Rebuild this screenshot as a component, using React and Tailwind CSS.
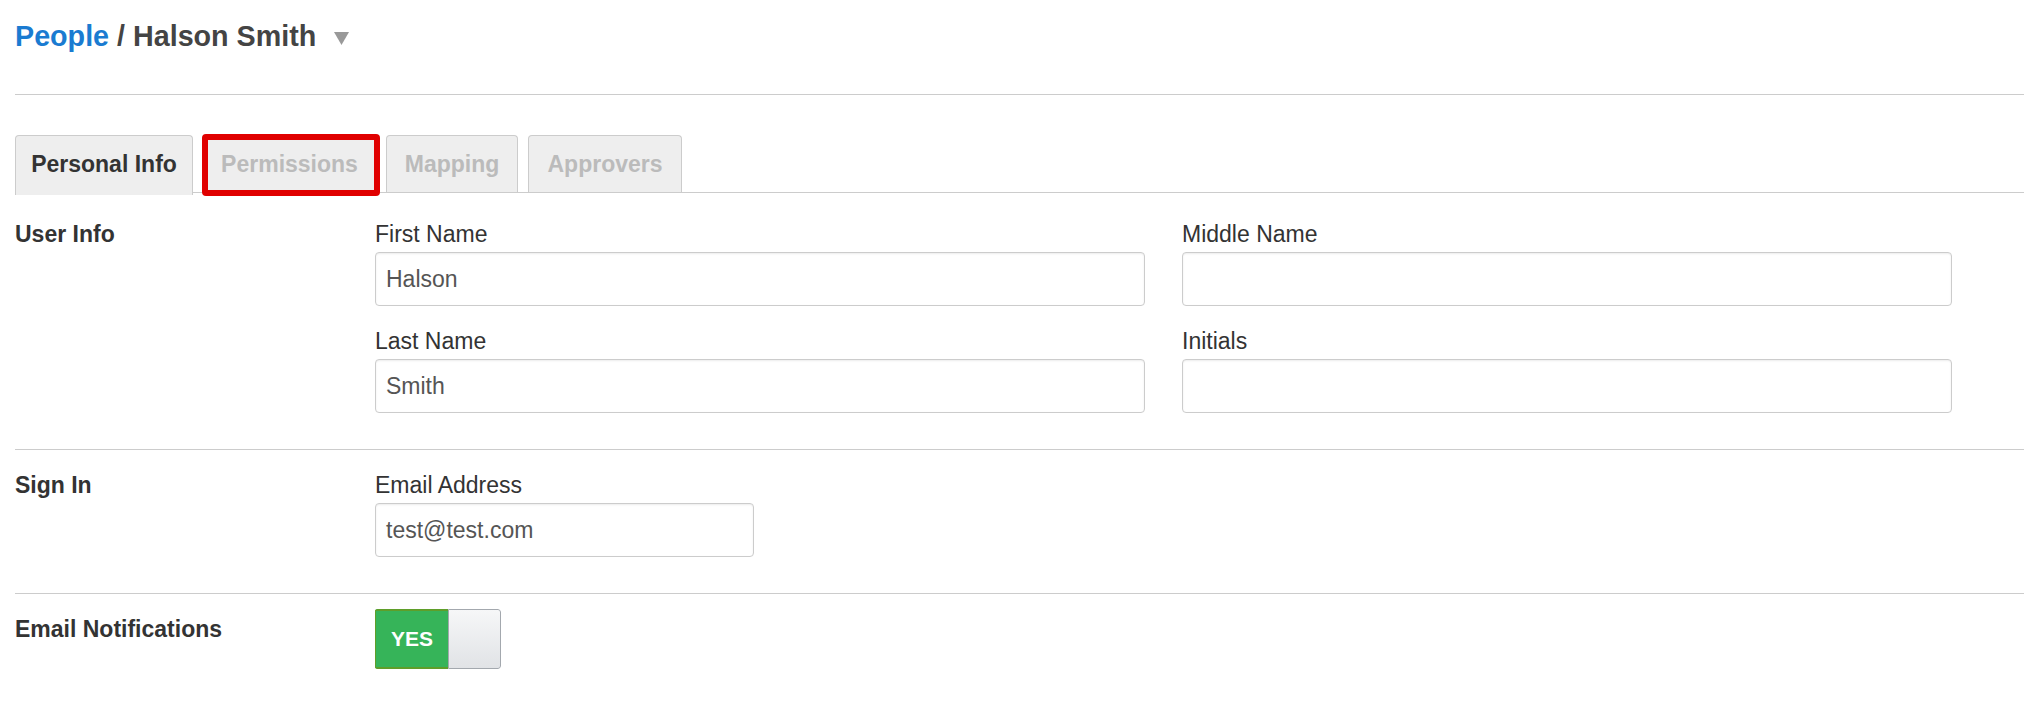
const tabs = [
  { name: "Personal Info", width: "w-[178px]", active: true },
  { name: "Permissions", width: "w-[173px]", marked: true },
  { name: "Mapping", width: "w-[132px]" },
  { name: "Approvers", width: "w-[154px]" },
]

function Field({ label, value, className }) {
  return (
    <div className={className}>
      <div className="text-[23px] leading-[32px] text-[#333]">{label}</div>
      <div className="mt-[2px] flex h-[54px] items-center rounded-[4px] border border-[#ccc] bg-white pl-[10px] text-[23px] text-[#555] shadow-[inset_0_1px_2px_rgba(0,0,0,0.08)]">
        {value}
      </div>
    </div>
  )
}

function Tab({ tab }) {
  if (tab.active) {
    return (
      <li
        className={`${tab.width} relative -mb-[3px] flex h-[60px] items-start justify-center rounded-t-[4px] border border-b-0 border-[#ccc] bg-[#eee] pt-[15px] text-[23px] font-bold leading-[26px] text-[#333]`}
      >
        {tab.name}
      </li>
    )
  }

  return (
    <li
      className={`${tab.width} relative flex h-[57px] items-start justify-center rounded-t-[4px] border border-b-0 border-[#ccc] bg-[#eee] pt-[15px] text-[23px] font-bold leading-[26px] text-[#bbb]`}
    >
      {tab.name}
      {tab.marked ? (
        <span className="absolute -top-[2px] -right-[5px] -bottom-[4px] -left-[2px] rounded-[4px] border-[6px] border-[#e00000]" />
      ) : null}
    </li>
  )
}

export default function App() {
  return (
    <div className="min-h-[706px] bg-white pl-[15px] font-['Liberation_Sans',Arial,sans-serif] text-[#333]">
      <div className="box-border flex h-[95px] items-start border-b border-[#ccc] pt-[20px]">
        <h1 className="flex items-center text-[28.7px] font-bold leading-[32px] text-[#444]">
          <span className="text-[#1a7bd1]">People</span>
          <span className="ml-[8px]">/ Halson Smith</span>
          <svg width="15" height="13" viewBox="0 0 15 13" className="ml-[18px] mt-[4px]">
            <polygon points="0,0 15,0 7.5,13" fill="#999" />
          </svg>
        </h1>
      </div>

      <ul className="mt-[40px] flex items-end gap-[10px] border-b border-[#ccc]">
        {tabs.map((tab) => (
          <Tab key={tab.name} tab={tab} />
        ))}
      </ul>

      <section className="flex border-b border-[#ccc] pt-[25px] pb-[36px]">
        <div className="w-[360px] text-[23px] font-bold leading-[32px] text-[#333]">User Info</div>
        <div className="grid grid-cols-[770px_770px] gap-x-[37px] gap-y-[19px]">
          <Field label="First Name" value="Halson" />
          <Field label="Middle Name" value="" />
          <Field label="Last Name" value="Smith" />
          <Field label="Initials" value="" />
        </div>
      </section>

      <section className="flex border-b border-[#ccc] pt-[19px] pb-[36px]">
        <div className="w-[360px] text-[23px] font-bold leading-[32px] text-[#333]">Sign In</div>
        <Field label="Email Address" value="test@test.com" className="w-[379px]" />
      </section>

      <section className="flex pt-[15px]">
        <div className="mt-[4px] w-[360px] text-[23px] font-bold leading-[32px] text-[#333]">
          Email Notifications
        </div>
        <div className="flex h-[60px] w-[126px] overflow-hidden rounded-[3px]">
          <div className="flex w-[73px] items-center justify-center border-y-2 border-l border-[#5f9e2a] bg-[#36b459] text-[21px] font-bold text-white">
            YES
          </div>
          <div className="flex-1 rounded-r-[3px] border border-[#a3a8ae] bg-gradient-to-b from-[#f6f7f8] to-[#e1e3e6]" />
        </div>
      </section>
    </div>
  )
}
